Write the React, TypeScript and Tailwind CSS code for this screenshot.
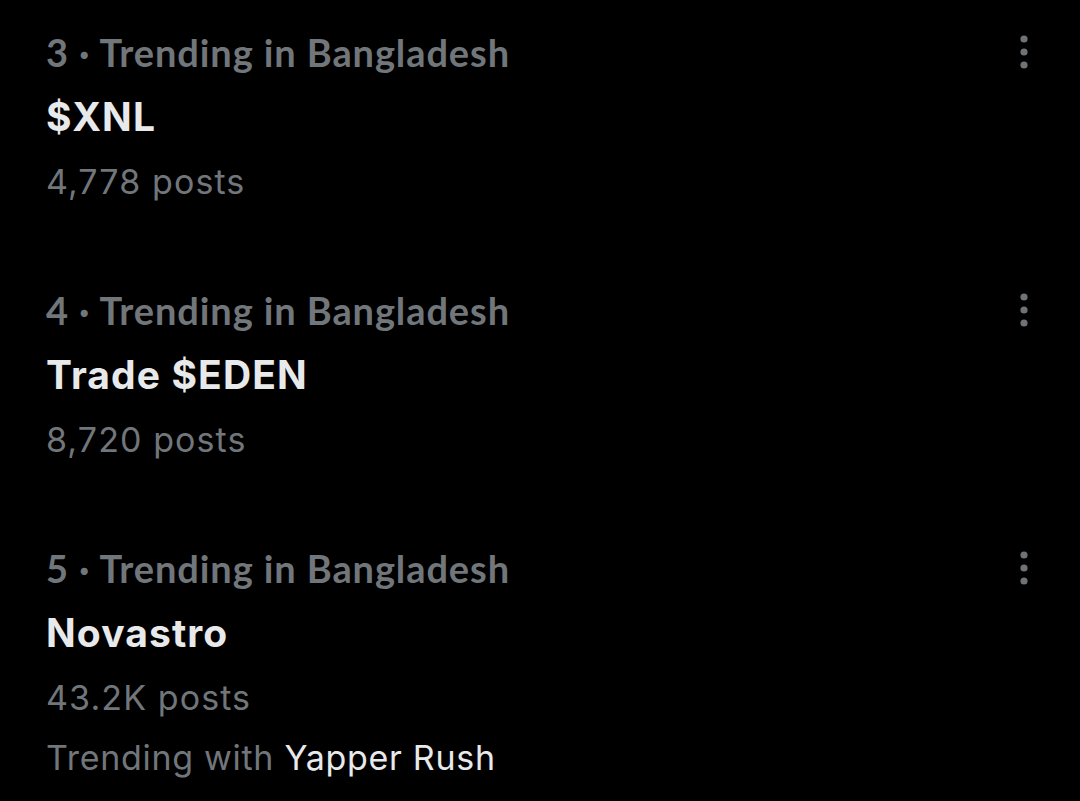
import React from 'react';

interface Trend {
  rank: number;
  title: string;
  posts: string;
  with?: string;
}

const trends: Trend[] = [
  { rank: 3, title: '$XNL', posts: '4,778 posts' },
  { rank: 4, title: 'Trade $EDEN', posts: '8,720 posts' },
  { rank: 5, title: 'Novastro', posts: '43.2K posts', with: 'Yapper Rush' },
];

function MoreIcon() {
  return (
    <svg width="10" height="34" viewBox="0 0 10 34" className="text-[#6e7378]">
      <circle cx="5" cy="4" r="3.6" fill="currentColor" />
      <circle cx="5" cy="17" r="3.6" fill="currentColor" />
      <circle cx="5" cy="30" r="3.6" fill="currentColor" />
    </svg>
  );
}

function TrendRow({ trend }: { trend: Trend }) {
  return (
    <div className="flex items-start justify-between">
      <div className="flex flex-col">
        <div className="text-[38px] leading-[64px] tracking-[0.9px] font-bold text-[#71767b] [font-family:Lato,'Noto_Sans',sans-serif]">
          {trend.rank} · Trending in Bangladesh
        </div>
        <div className="text-[39px] leading-[66px] tracking-[1.1px] font-bold text-[#e7e9ea] [font-family:Inter,sans-serif]">
          {trend.title}
        </div>
        <div className="text-[34px] leading-[64px] tracking-[1.1px] text-[#71767b] [font-family:Inter,sans-serif]">
          {trend.posts}
        </div>
        {trend.with && (
          <div className="text-[34px] leading-[56px] tracking-[0.7px] text-[#71767b] [font-family:Inter,sans-serif]">
            Trending with <span className="text-[#e7e9ea]">{trend.with}</span>
          </div>
        )}
      </div>
      {/* More menu */}
      <div className="pt-[15px] pr-[51px]">
        <MoreIcon />
      </div>
    </div>
  );
}

export default function App() {
  return (
    <div className="w-[1080px] h-[801px] bg-black overflow-hidden">
      <div className="flex flex-col gap-[64px] pt-[20px] pl-[46px]">
        {trends.map((t) => (
          <TrendRow key={t.rank} trend={t} />
        ))}
      </div>
    </div>
  );
}
